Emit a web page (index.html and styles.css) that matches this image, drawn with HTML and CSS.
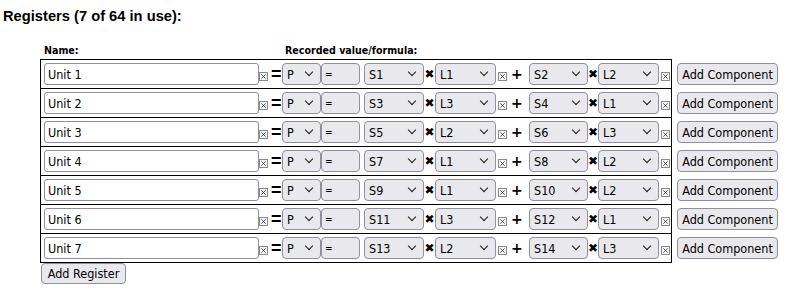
FILE: index.html
```html
<!DOCTYPE html>
<html>
<head>
<meta charset="utf-8">
<link rel="stylesheet" href="styles.css">
</head>
<body>
<div class="page">
  <h2 class="title">Registers (7 of 64 in use):</h2>
  <div class="heads"><span class="h-name">Name:</span><span class="h-val">Recorded value/formula:</span></div>
  <div class="regs">
    <div class="reg">
      <div class="cell">
        <input class="name" value="Unit 1">
        <span class="xb"><svg width="6" height="6" viewBox="0 0 6 6"><path d="M0.5 0.5L5.5 5.5M5.5 0.5L0.5 5.5" stroke="#333" stroke-width="1" fill="none"/></svg></span>
        <span class="eq">=</span>
        <span class="selwrap w-p"><select class="sel"><option>P</option></select></span>
        <input class="formula" value="=">
        <span class="selwrap w-s1"><select class="sel"><option>S1</option></select></span>
        <span class="times t1">✖</span>
        <span class="selwrap w-l1"><select class="sel"><option>L1</option></select></span>
        <span class="xb xb2"><svg width="6" height="6" viewBox="0 0 6 6"><path d="M0.5 0.5L5.5 5.5M5.5 0.5L0.5 5.5" stroke="#333" stroke-width="1" fill="none"/></svg></span>
        <span class="plus">+</span>
        <span class="selwrap w-s2"><select class="sel"><option>S2</option></select></span>
        <span class="times t2">✖</span>
        <span class="selwrap w-l2"><select class="sel"><option>L2</option></select></span>
        <span class="xb xb2"><svg width="6" height="6" viewBox="0 0 6 6"><path d="M0.5 0.5L5.5 5.5M5.5 0.5L0.5 5.5" stroke="#333" stroke-width="1" fill="none"/></svg></span>
      </div>
      <button class="btn add-comp">Add Component</button>
    </div>
    <div class="reg">
      <div class="cell">
        <input class="name" value="Unit 2">
        <span class="xb"><svg width="6" height="6" viewBox="0 0 6 6"><path d="M0.5 0.5L5.5 5.5M5.5 0.5L0.5 5.5" stroke="#333" stroke-width="1" fill="none"/></svg></span>
        <span class="eq">=</span>
        <span class="selwrap w-p"><select class="sel"><option>P</option></select></span>
        <input class="formula" value="=">
        <span class="selwrap w-s1"><select class="sel"><option>S3</option></select></span>
        <span class="times t1">✖</span>
        <span class="selwrap w-l1"><select class="sel"><option>L3</option></select></span>
        <span class="xb xb2"><svg width="6" height="6" viewBox="0 0 6 6"><path d="M0.5 0.5L5.5 5.5M5.5 0.5L0.5 5.5" stroke="#333" stroke-width="1" fill="none"/></svg></span>
        <span class="plus">+</span>
        <span class="selwrap w-s2"><select class="sel"><option>S4</option></select></span>
        <span class="times t2">✖</span>
        <span class="selwrap w-l2"><select class="sel"><option>L1</option></select></span>
        <span class="xb xb2"><svg width="6" height="6" viewBox="0 0 6 6"><path d="M0.5 0.5L5.5 5.5M5.5 0.5L0.5 5.5" stroke="#333" stroke-width="1" fill="none"/></svg></span>
      </div>
      <button class="btn add-comp">Add Component</button>
    </div>
    <div class="reg">
      <div class="cell">
        <input class="name" value="Unit 3">
        <span class="xb"><svg width="6" height="6" viewBox="0 0 6 6"><path d="M0.5 0.5L5.5 5.5M5.5 0.5L0.5 5.5" stroke="#333" stroke-width="1" fill="none"/></svg></span>
        <span class="eq">=</span>
        <span class="selwrap w-p"><select class="sel"><option>P</option></select></span>
        <input class="formula" value="=">
        <span class="selwrap w-s1"><select class="sel"><option>S5</option></select></span>
        <span class="times t1">✖</span>
        <span class="selwrap w-l1"><select class="sel"><option>L2</option></select></span>
        <span class="xb xb2"><svg width="6" height="6" viewBox="0 0 6 6"><path d="M0.5 0.5L5.5 5.5M5.5 0.5L0.5 5.5" stroke="#333" stroke-width="1" fill="none"/></svg></span>
        <span class="plus">+</span>
        <span class="selwrap w-s2"><select class="sel"><option>S6</option></select></span>
        <span class="times t2">✖</span>
        <span class="selwrap w-l2"><select class="sel"><option>L3</option></select></span>
        <span class="xb xb2"><svg width="6" height="6" viewBox="0 0 6 6"><path d="M0.5 0.5L5.5 5.5M5.5 0.5L0.5 5.5" stroke="#333" stroke-width="1" fill="none"/></svg></span>
      </div>
      <button class="btn add-comp">Add Component</button>
    </div>
    <div class="reg">
      <div class="cell">
        <input class="name" value="Unit 4">
        <span class="xb"><svg width="6" height="6" viewBox="0 0 6 6"><path d="M0.5 0.5L5.5 5.5M5.5 0.5L0.5 5.5" stroke="#333" stroke-width="1" fill="none"/></svg></span>
        <span class="eq">=</span>
        <span class="selwrap w-p"><select class="sel"><option>P</option></select></span>
        <input class="formula" value="=">
        <span class="selwrap w-s1"><select class="sel"><option>S7</option></select></span>
        <span class="times t1">✖</span>
        <span class="selwrap w-l1"><select class="sel"><option>L1</option></select></span>
        <span class="xb xb2"><svg width="6" height="6" viewBox="0 0 6 6"><path d="M0.5 0.5L5.5 5.5M5.5 0.5L0.5 5.5" stroke="#333" stroke-width="1" fill="none"/></svg></span>
        <span class="plus">+</span>
        <span class="selwrap w-s2"><select class="sel"><option>S8</option></select></span>
        <span class="times t2">✖</span>
        <span class="selwrap w-l2"><select class="sel"><option>L2</option></select></span>
        <span class="xb xb2"><svg width="6" height="6" viewBox="0 0 6 6"><path d="M0.5 0.5L5.5 5.5M5.5 0.5L0.5 5.5" stroke="#333" stroke-width="1" fill="none"/></svg></span>
      </div>
      <button class="btn add-comp">Add Component</button>
    </div>
    <div class="reg">
      <div class="cell">
        <input class="name" value="Unit 5">
        <span class="xb"><svg width="6" height="6" viewBox="0 0 6 6"><path d="M0.5 0.5L5.5 5.5M5.5 0.5L0.5 5.5" stroke="#333" stroke-width="1" fill="none"/></svg></span>
        <span class="eq">=</span>
        <span class="selwrap w-p"><select class="sel"><option>P</option></select></span>
        <input class="formula" value="=">
        <span class="selwrap w-s1"><select class="sel"><option>S9</option></select></span>
        <span class="times t1">✖</span>
        <span class="selwrap w-l1"><select class="sel"><option>L1</option></select></span>
        <span class="xb xb2"><svg width="6" height="6" viewBox="0 0 6 6"><path d="M0.5 0.5L5.5 5.5M5.5 0.5L0.5 5.5" stroke="#333" stroke-width="1" fill="none"/></svg></span>
        <span class="plus">+</span>
        <span class="selwrap w-s2"><select class="sel"><option>S10</option></select></span>
        <span class="times t2">✖</span>
        <span class="selwrap w-l2"><select class="sel"><option>L2</option></select></span>
        <span class="xb xb2"><svg width="6" height="6" viewBox="0 0 6 6"><path d="M0.5 0.5L5.5 5.5M5.5 0.5L0.5 5.5" stroke="#333" stroke-width="1" fill="none"/></svg></span>
      </div>
      <button class="btn add-comp">Add Component</button>
    </div>
    <div class="reg">
      <div class="cell">
        <input class="name" value="Unit 6">
        <span class="xb"><svg width="6" height="6" viewBox="0 0 6 6"><path d="M0.5 0.5L5.5 5.5M5.5 0.5L0.5 5.5" stroke="#333" stroke-width="1" fill="none"/></svg></span>
        <span class="eq">=</span>
        <span class="selwrap w-p"><select class="sel"><option>P</option></select></span>
        <input class="formula" value="=">
        <span class="selwrap w-s1"><select class="sel"><option>S11</option></select></span>
        <span class="times t1">✖</span>
        <span class="selwrap w-l1"><select class="sel"><option>L3</option></select></span>
        <span class="xb xb2"><svg width="6" height="6" viewBox="0 0 6 6"><path d="M0.5 0.5L5.5 5.5M5.5 0.5L0.5 5.5" stroke="#333" stroke-width="1" fill="none"/></svg></span>
        <span class="plus">+</span>
        <span class="selwrap w-s2"><select class="sel"><option>S12</option></select></span>
        <span class="times t2">✖</span>
        <span class="selwrap w-l2"><select class="sel"><option>L1</option></select></span>
        <span class="xb xb2"><svg width="6" height="6" viewBox="0 0 6 6"><path d="M0.5 0.5L5.5 5.5M5.5 0.5L0.5 5.5" stroke="#333" stroke-width="1" fill="none"/></svg></span>
      </div>
      <button class="btn add-comp">Add Component</button>
    </div>
    <div class="reg">
      <div class="cell">
        <input class="name" value="Unit 7">
        <span class="xb"><svg width="6" height="6" viewBox="0 0 6 6"><path d="M0.5 0.5L5.5 5.5M5.5 0.5L0.5 5.5" stroke="#333" stroke-width="1" fill="none"/></svg></span>
        <span class="eq">=</span>
        <span class="selwrap w-p"><select class="sel"><option>P</option></select></span>
        <input class="formula" value="=">
        <span class="selwrap w-s1"><select class="sel"><option>S13</option></select></span>
        <span class="times t1">✖</span>
        <span class="selwrap w-l1"><select class="sel"><option>L2</option></select></span>
        <span class="xb xb2"><svg width="6" height="6" viewBox="0 0 6 6"><path d="M0.5 0.5L5.5 5.5M5.5 0.5L0.5 5.5" stroke="#333" stroke-width="1" fill="none"/></svg></span>
        <span class="plus">+</span>
        <span class="selwrap w-s2"><select class="sel"><option>S14</option></select></span>
        <span class="times t2">✖</span>
        <span class="selwrap w-l2"><select class="sel"><option>L3</option></select></span>
        <span class="xb xb2"><svg width="6" height="6" viewBox="0 0 6 6"><path d="M0.5 0.5L5.5 5.5M5.5 0.5L0.5 5.5" stroke="#333" stroke-width="1" fill="none"/></svg></span>
      </div>
      <button class="btn add-comp">Add Component</button>
    </div>
  </div>
  <button class="btn add-reg">Add Register</button>
</div>
</body>
</html>
```

FILE: styles.css
```css
body {
  margin: 0;
  background: #fff;
  color: #000;
  font-family: "DejaVu Sans Condensed", "DejaVu Sans", sans-serif;
  font-size: 12.5px;
}
.page {
  padding: 8px 3px;
}
.title {
  margin: 0;
  font: bold 14.7px/17px "Liberation Sans", Arial, sans-serif;
}
.heads {
  display: flex;
  margin: 19px 0 2px 41px;
  font: bold 10.6px/13px "DejaVu Sans Condensed", "DejaVu Sans", sans-serif;
}
.h-name {
  width: 241px;
}
.regs {
  margin-left: 37px;
}
.reg {
  display: flex;
  align-items: center;
}
.reg + .reg {
  margin-top: -1px;
}
.cell {
  display: flex;
  align-items: flex-start;
  box-sizing: border-box;
  width: 632px;
  height: 30px;
  border: 1px solid #000;
  padding: 3px 1px 3px 3px;
}
input, select, button {
  font-family: "DejaVu Sans Condensed", "DejaVu Sans", sans-serif;
  font-size: 12.5px;
  color: #000;
  box-sizing: border-box;
  margin: 0;
  outline: none;
}
.name {
  width: 215px;
  height: 22px;
  border: 1px solid #8f8f9d;
  border-radius: 3px;
  padding: 0 0 0 3px;
  background: #fff;
}
.xb {
  display: flex;
  align-items: center;
  justify-content: center;
  box-sizing: border-box;
  width: 9px;
  height: 9px;
  margin: 9px 0 0 0;
  border: 1px solid #8a8a8a;
  background: #f4f4f4;
}
.xb svg {
  display: block;
  width: 5px;
  height: 5px;
}
.xb2 {
  margin-left: 2px;
}
.eq {
  box-sizing: border-box;
  width: 14px;
  padding-left: 3px;
  font: bold 18px/22px "Liberation Sans", Arial, sans-serif;
}
.selwrap {
  position: relative;
  display: flex;
}
.selwrap::after {
  content: "";
  position: absolute;
  right: 9px;
  top: 6px;
  width: 5px;
  height: 5px;
  border-right: 1.5px solid #1a1a1a;
  border-bottom: 1.5px solid #1a1a1a;
  transform: rotate(45deg);
  pointer-events: none;
}
.sel {
  -webkit-appearance: none;
  appearance: none;
  width: 100%;
  height: 22px;
  border: 1px solid #8f8f9d;
  border-radius: 4px;
  background: #e9e9ed;
  padding: 0 0 0 4px;
}
.w-p { width: 39px; }
.w-s1 { width: 60px; margin-left: 4px; }
.w-l1 { width: 61px; }
.w-s2 { width: 59px; }
.w-l2 { width: 61px; }
.formula {
  width: 39px;
  height: 22px;
  border: 1px solid #8f8f9d;
  border-radius: 4px;
  background: #e9e9ed;
  padding: 0 0 0 3px;
  font-size: 10px;
  text-align: left;
}
.times {
  box-sizing: border-box;
  text-align: center;
  font: 12px/22px "DejaVu Sans", sans-serif;
}
.t1 { width: 11px; }
.t2 { width: 10px; }
.plus {
  box-sizing: border-box;
  width: 22px;
  padding-left: 4px;
  font: bold 14px/22px "DejaVu Sans", sans-serif;
}
.btn {
  height: 22px;
  border: 1px solid #8f8f9d;
  border-radius: 4px;
  background: #e9e9ed;
  padding: 0;
  text-align: center;
}
.add-comp {
  width: 101px;
  margin-left: 5px;
}
.add-reg {
  display: block;
  width: 85px;
  height: 21px;
  margin-left: 38px;
}
```
